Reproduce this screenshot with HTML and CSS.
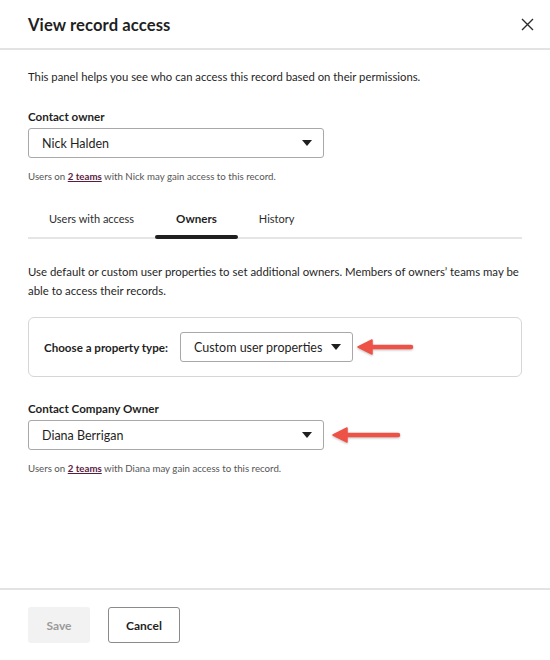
FILE: index.html
```html
<!DOCTYPE html>
<html>
<head>
<meta charset="utf-8">
<link rel="stylesheet" href="styles.css">
</head>
<body>
<div class="panel">
  <header class="header">
    <h1 class="title">View record access</h1>
    <button class="close" aria-label="Close">
      <svg width="13" height="13" viewBox="0 0 13 13"><path d="M1 1L12 12M12 1L1 12" stroke="#2d2d2d" stroke-width="1.4" fill="none"/></svg>
    </button>
  </header>
  <main class="main">
    <p class="intro">This panel helps you see who can access this record based on their permissions.</p>

    <div class="label">Contact owner</div>
    <div class="select wide"><span>Nick Halden</span><span class="caret"></span></div>
    <p class="help">Users on <a class="link">2 teams</a> with Nick may gain access to this record.</p>

    <nav class="tabs">
      <div class="tab">Users with access</div>
      <div class="tab active">Owners</div>
      <div class="tab">History</div>
    </nav>

    <p class="para">Use default or custom user properties to set additional owners. Members of owners’ teams may be able to access their records.</p>

    <div class="box">
      <span class="box-label">Choose a property type:</span>
      <div class="select small"><span>Custom user properties</span><span class="caret"></span></div>
      <svg class="arrow a1" width="58" height="18" viewBox="0 0 58 18"><g fill="#ee5246"><path d="M1 9L15 2V16Z" stroke="#ee5246" stroke-width="1.5" stroke-linejoin="round"/><path d="M12 9H54" stroke="#ee5246" stroke-width="4.5" stroke-linecap="round"/></g></svg>
    </div>

    <div class="label label2">Contact Company Owner</div>
    <div class="row">
      <div class="select wide"><span>Diana Berrigan</span><span class="caret"></span></div>
      <svg class="arrow a2" width="70" height="18" viewBox="0 0 70 18"><g fill="#ee5246"><path d="M1 9L15 2V16Z" stroke="#ee5246" stroke-width="1.5" stroke-linejoin="round"/><path d="M12 9H66" stroke="#ee5246" stroke-width="4.5" stroke-linecap="round"/></g></svg>
    </div>
    <p class="help">Users on <a class="link">2 teams</a> with Diana may gain access to this record.</p>
  </main>
  <footer class="footer">
    <button class="btn save">Save</button>
    <button class="btn cancel">Cancel</button>
  </footer>
</div>
</body>
</html>
```
FILE: styles.css
```css
* { box-sizing: border-box; }
html, body { margin: 0; padding: 0; background: #fff; }
body {
  font-family: Lato, "Noto Sans", sans-serif;
  color: #1f1f1f;
}
.panel {
  width: 550px;
  height: 660px;
  display: flex;
  flex-direction: column;
}
.header {
  height: 50px;
  flex: none;
  display: flex;
  align-items: center;
  justify-content: space-between;
  padding: 1px 16px 0 28px;
  border-bottom: 2px solid #e3e3e3;
}
.title {
  margin: 0;
  font-size: 16.6px;
  font-weight: 700;
  letter-spacing: 0.1px;
}
.close {
  border: none;
  background: none;
  padding: 0;
  width: 13px;
  height: 13px;
  display: flex;
}
.main {
  flex: 1;
  padding: 0 28px;
}
.intro {
  margin: 18px 0 0;
  font-size: 11.3px;
  line-height: 18px;
}
.label {
  margin-top: 22px;
  font-size: 11.6px;
  font-weight: 700;
  line-height: 18px;
}
.label2 { margin-top: 23px; }
.select {
  display: flex;
  align-items: center;
  justify-content: space-between;
  height: 30px;
  border: 1px solid #a8a8a8;
  border-radius: 3px;
  background: #fff;
  font-size: 12.5px;
  padding: 0 11px 0 13px;
  margin-top: 2px;
}
.select.wide { width: 296px; }
.select.small { width: 173px; height: 30px; margin-top: 0; padding-right: 11px; }
.caret {
  width: 0;
  height: 0;
  border-left: 5px solid transparent;
  border-right: 5px solid transparent;
  border-top: 6px solid #1f1f1f;
}
.help {
  margin: 10px 0 0;
  font-size: 9.7px;
  line-height: 16px;
  color: #555;
}
.link {
  color: #5b1c42;
  font-weight: 700;
  text-decoration: underline;
}
.tabs {
  display: flex;
  margin-top: 16px;
  border-bottom: 2px solid #e5e5e5;
}
.tab {
  padding: 10px 21px 9px;
  font-size: 11px;
  line-height: 18px;
  position: relative;
  color: #2d2d2d;
}
.tab.active {
  font-weight: 700;
  font-size: 11.6px;
  color: #1f1f1f;
}
.tab.active::after {
  content: "";
  position: absolute;
  left: 0;
  right: 0;
  bottom: -2px;
  height: 4px;
  border-radius: 2px;
  background: #1f1f1f;
}
.para {
  margin: 23px 0 0;
  font-size: 11.4px;
  line-height: 19px;
}
.box {
  margin-top: 17px;
  height: 60px;
  border: 1px solid #d6d6d6;
  border-radius: 6px;
  display: flex;
  align-items: center;
  padding: 0 15px;
}
.box-label {
  font-size: 11.6px;
  font-weight: 700;
  margin-right: 12px;
}
.arrow {
  flex: none;
  display: block;
  filter: drop-shadow(0 1px 1px rgba(0, 0, 0, 0.25));
}
.a1 { margin-left: 4px; }
.row {
  display: flex;
  align-items: center;
  margin-top: 2px;
}
.row .select { margin-top: 0; }
.a2 { margin-left: 8px; }
.footer {
  flex: none;
  height: 72px;
  border-top: 2px solid #e3e3e3;
  display: flex;
  align-items: flex-start;
  padding: 17px 28px 0;
  gap: 18px;
}
.btn {
  height: 36px;
  border-radius: 3px;
  font-family: inherit;
  font-size: 12px;
  font-weight: 700;
}
.save {
  width: 62px;
  border: none;
  background: #f2f2f2;
  color: #9a9a9a;
}
.cancel {
  width: 72px;
  border: 1px solid #8a8a8a;
  background: #fff;
  color: #1f1f1f;
}
```
